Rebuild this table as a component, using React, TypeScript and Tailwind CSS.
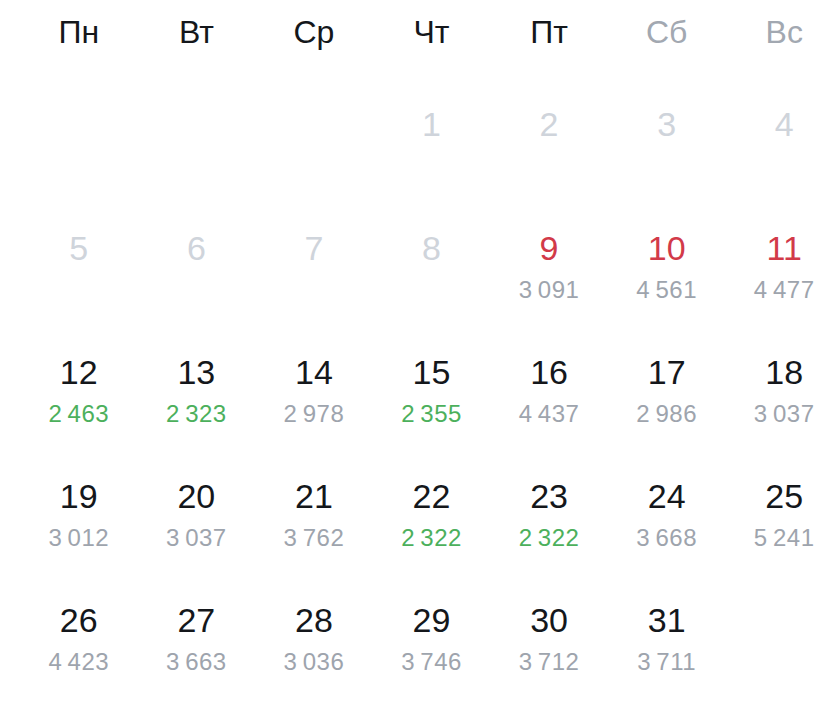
import React from 'react';

type Day = {
  n?: number;
  sub?: string;
  tone?: 'muted' | 'red' | 'normal';
  good?: boolean;
};

const weekdays = ['Пн', 'Вт', 'Ср', 'Чт', 'Пт', 'Сб', 'Вс'];

const weeks: Day[][] = [
  [{}, {}, {}, { n: 1, tone: 'muted' }, { n: 2, tone: 'muted' }, { n: 3, tone: 'muted' }, { n: 4, tone: 'muted' }],
  [
    { n: 5, tone: 'muted' },
    { n: 6, tone: 'muted' },
    { n: 7, tone: 'muted' },
    { n: 8, tone: 'muted' },
    { n: 9, tone: 'red', sub: '3 091' },
    { n: 10, tone: 'red', sub: '4 561' },
    { n: 11, tone: 'red', sub: '4 477' },
  ],
  [
    { n: 12, sub: '2 463', good: true },
    { n: 13, sub: '2 323', good: true },
    { n: 14, sub: '2 978' },
    { n: 15, sub: '2 355', good: true },
    { n: 16, sub: '4 437' },
    { n: 17, sub: '2 986' },
    { n: 18, sub: '3 037' },
  ],
  [
    { n: 19, sub: '3 012' },
    { n: 20, sub: '3 037' },
    { n: 21, sub: '3 762' },
    { n: 22, sub: '2 322', good: true },
    { n: 23, sub: '2 322', good: true },
    { n: 24, sub: '3 668' },
    { n: 25, sub: '5 241' },
  ],
  [
    { n: 26, sub: '4 423' },
    { n: 27, sub: '3 663' },
    { n: 28, sub: '3 036' },
    { n: 29, sub: '3 746' },
    { n: 30, sub: '3 712' },
    { n: 31, sub: '3 711' },
    {},
  ],
];

function DayCell({ day }: { day: Day }) {
  const numColor =
    day.tone === 'muted' ? 'text-[#cfd4db]' : day.tone === 'red' ? 'text-[#d23a49]' : 'text-[#14171b]';
  return (
    <div className="flex h-[124px] flex-col items-center pt-[42px]">
      {day.n !== undefined && <span className={`text-[34px] leading-[36px] ${numColor}`}>{day.n}</span>}
      {day.sub && (
        <span
          className={`mt-[12px] text-[24px] leading-[24px] tracking-[0.5px] ${day.good ? 'text-[#4cb05c]' : 'text-[#9ea4ad]'}`}
        >
          {day.sub.replace(' ', '\u2009')}
        </span>
      )}
    </div>
  );
}

export default function App() {
  return (
    <div className="h-[704px] w-full overflow-hidden bg-white" style={{ fontFamily: '"Liberation Sans", Arial, sans-serif' }}>
      <div className="ml-[20px] w-[823px]">
        <div className="grid h-[64px] grid-cols-7 items-center">
          {weekdays.map((w, i) => (
            <span
              key={w}
              className={`text-center text-[32px] leading-[36px] ${i > 4 ? 'text-[#a2a8b1]' : 'text-[#14171b]'}`}
            >
              {w}
            </span>
          ))}
        </div>
        {weeks.map((week, wi) => (
          <div key={wi} className="grid grid-cols-7">
            {week.map((d, di) => (
              <DayCell key={di} day={d} />
            ))}
          </div>
        ))}
      </div>
    </div>
  );
}
